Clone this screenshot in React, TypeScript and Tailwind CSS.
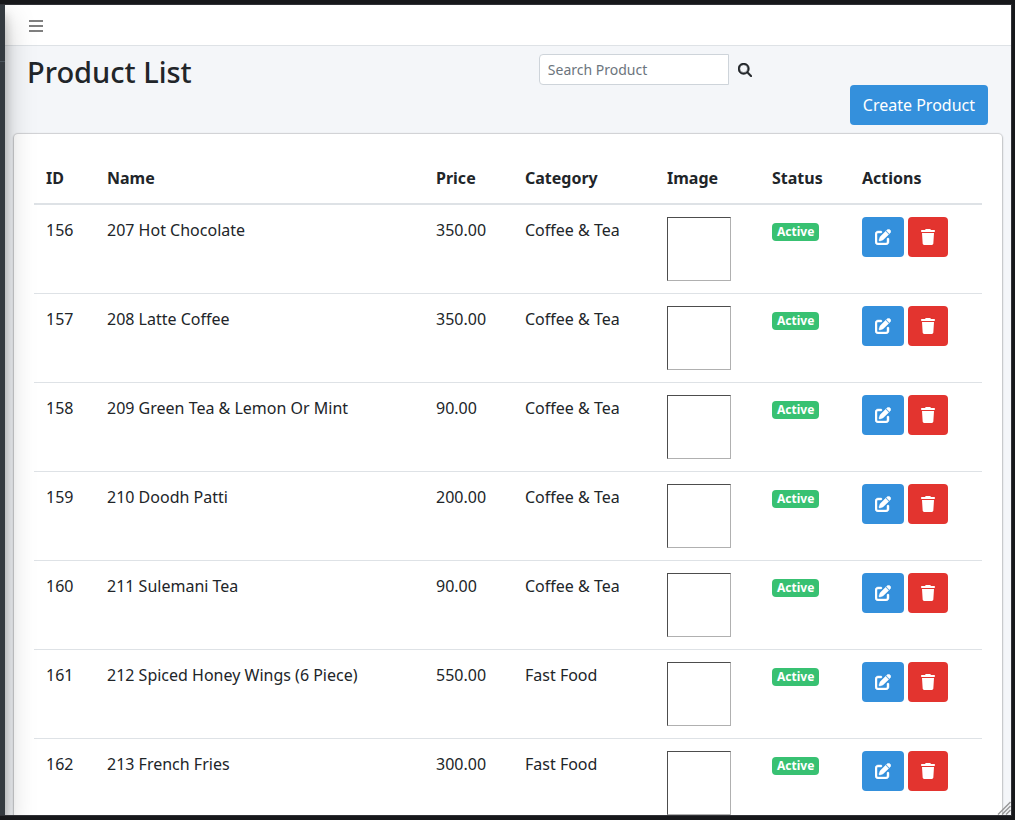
import { FaMagnifyingGlass, FaPenToSquare } from "react-icons/fa6";

type Product = { id: number; name: string; price: string; category: string };

const products: Product[] = [
  { id: 156, name: "207 Hot Chocolate", price: "350.00", category: "Coffee & Tea" },
  { id: 157, name: "208 Latte Coffee", price: "350.00", category: "Coffee & Tea" },
  { id: 158, name: "209 Green Tea & Lemon Or Mint", price: "90.00", category: "Coffee & Tea" },
  { id: 159, name: "210 Doodh Patti", price: "200.00", category: "Coffee & Tea" },
  { id: 160, name: "211 Sulemani Tea", price: "90.00", category: "Coffee & Tea" },
  { id: 161, name: "212 Spiced Honey Wings (6 Piece)", price: "550.00", category: "Fast Food" },
  { id: 162, name: "213 French Fries", price: "300.00", category: "Fast Food" },
];

const headings = ["ID", "Name", "Price", "Category", "Image", "Status", "Actions"];

function TrashIcon() {
  return (
    <svg viewBox="0 0 448 512" className="h-4 w-[14px]" fill="currentColor" aria-hidden="true">
      <path d="M135.2 17.7L128 32H32C14.3 32 0 46.3 0 64S14.3 96 32 96H416c17.7 0 32-14.3 32-32s-14.3-32-32-32H320l-7.2-14.3C307.4 6.8 296.3 0 284.2 0H163.8c-12.1 0-23.2 6.8-28.6 17.7zM416 128H32L53.2 467c1.6 25.3 22.6 45 47.9 45H346.9c25.3 0 46.3-19.7 47.9-45L416 128z" />
    </svg>
  );
}

function MenuIcon() {
  return (
    <svg viewBox="0 0 14 12" className="h-3 w-[14px]" fill="currentColor" aria-hidden="true">
      <path d="M0 0h14v2H0zM0 5h14v2H0zM0 10h14v2H0z" />
    </svg>
  );
}

function ProductRow({ product }: { product: Product }) {
  const cell = "border-b border-[#dee2e6] p-3 align-top leading-[26px]";
  return (
    <tr>
      <td className={cell}>{product.id}</td>
      <td className={cell}>{product.name}</td>
      <td className={cell}>{product.price}</td>
      <td className={cell}>{product.category}</td>
      <td className={cell}>
        <div
          role="img"
          aria-label={product.name}
          className="size-16 border border-t-[#4d4d4d] border-r-[#b0b0b0] border-b-[#b0b0b0] border-l-[#4d4d4d]"
        />
      </td>
      <td className={cell}>
        <span className="mt-[6px] block w-fit rounded bg-[#38c172] px-[5px] py-[3px] text-[12px] leading-[12px] font-bold text-white">
          Active
        </span>
      </td>
      <td className={cell}>
        <div className="flex gap-1">
          <a
            href="#edit"
            aria-label={`Edit ${product.name}`}
            className="flex h-10 items-center rounded bg-[#3490dc] px-[13px] text-white"
          >
            <FaPenToSquare className="size-4 stroke-white" strokeWidth={14} />
          </a>
          <button
            type="button"
            aria-label={`Delete ${product.name}`}
            className="flex h-10 items-center rounded bg-[#e3342f] px-[13px] text-white"
          >
            <TrashIcon />
          </button>
        </div>
      </td>
    </tr>
  );
}

export default function App() {
  return (
    <div className="h-screen overflow-hidden bg-[#17181b] pt-1 pr-[3px] pb-1 font-['Noto_Sans',sans-serif] text-base leading-6 text-[#212529]">
      <div className="relative flex h-full overflow-hidden border-y border-r border-[#303136] bg-[#f4f6f9]">
        <aside className="relative z-10 -ml-[245px] w-[250px] shrink-0 bg-[#343a40] shadow-[0_14px_28px_rgba(0,0,0,0.25),0_10px_10px_rgba(0,0,0,0.22)]">
          <div className="h-[57px] border-b border-[#4b545c]" />
        </aside>
        <div className="min-w-0 flex-1">
          <nav className="flex h-[41px] items-center border-b border-[#dee2e6] bg-white pt-[2px] pl-[23px]">
            <button type="button" aria-label="Toggle menu" className="pl-px text-black/50">
              <MenuIcon />
            </button>
          </nav>
          <main className="px-[9px]">
            <header className="flex h-[88px] items-start pr-[14px] pl-[13px]">
              <h1 className="flex-1 pt-2 text-[29px] leading-[35px] font-medium">Product List</h1>
              <form className="mr-[98px] flex pt-2" onSubmit={(e) => e.preventDefault()}>
                <input
                  type="search"
                  aria-label="Search Product"
                  placeholder="Search Product"
                  className="h-[31px] w-[190px] rounded-l border border-[#ced4da] bg-white px-2 text-[14px] leading-[21px] outline-none placeholder:text-[#6c757d]"
                />
                <button type="submit" aria-label="Search" className="flex h-[31px] items-center pl-[9px]">
                  <FaMagnifyingGlass className="size-[14px] stroke-current" strokeWidth={18} />
                </button>
              </form>
              <a
                href="#create"
                className="mt-[39px] flex h-10 items-center rounded bg-[#3490dc] px-[13px] whitespace-nowrap text-white"
              >
                Create Product
              </a>
            </header>
            <section className="rounded bg-white p-5 shadow-[0_0_1px_1px_rgba(0,0,0,0.13),0_1px_3px_rgba(0,0,0,0.2)]">
              <table className="w-full table-fixed border-separate border-spacing-0 text-left">
                <colgroup>
                  <col className="w-[61px]" />
                  <col />
                  <col className="w-[89px]" />
                  <col className="w-[142px]" />
                  <col className="w-[105px]" />
                  <col className="w-[90px]" />
                  <col className="w-[132px]" />
                </colgroup>
                <thead>
                  <tr>
                    {headings.map((heading) => (
                      <th key={heading} className="border-b-2 border-[#dee2e6] px-3 pt-3 pb-[13px] font-bold">
                        {heading}
                      </th>
                    ))}
                  </tr>
                </thead>
                <tbody>
                  {products.map((product) => (
                    <ProductRow key={product.id} product={product} />
                  ))}
                </tbody>
              </table>
            </section>
          </main>
        </div>
        <svg
          className="absolute right-0 bottom-0 z-20 size-[14px]"
          viewBox="0 0 14 14"
          stroke="#999999"
          strokeWidth="1.5"
          aria-hidden="true"
        >
          <path d="M1 13.500 13.500 1M5 13.500l8.500-8.500M9 13.500l4.500-4.500" />
        </svg>
      </div>
    </div>
  );
}
